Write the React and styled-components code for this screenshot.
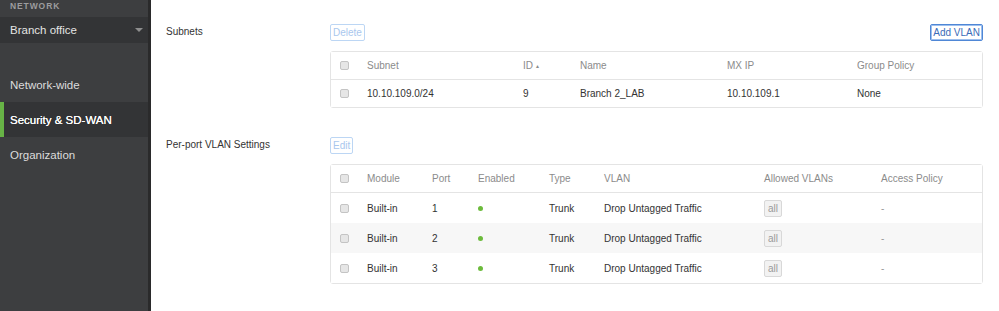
import React from 'react';
import styled, { createGlobalStyle } from 'styled-components';

const GlobalStyle = createGlobalStyle`
    html, body {
        margin: 0;
        padding: 0;
        background: #ffffff;
        font-family: "Liberation Sans", Arial, sans-serif;
    }
`;

const Page = styled.div`
    display: grid;
    grid-template-columns: 151px 1fr;
    width: 999px;
    height: 311px;
    overflow: hidden;
`;

const Sidebar = styled.aside`
    background: #3d3e40;
    border-right: 3px solid #2a2a2b;
    display: flex;
    flex-direction: column;
`;

const SideLabel = styled.div`
    height: 17px;
    padding: 0 10px;
    font-size: 8.5px;
    font-weight: bold;
    letter-spacing: 0.9px;
    line-height: 13px;
    color: #9c9c9e;
`;

const Dropdown = styled.div`
    height: 26px;
    padding: 0 5px 0 10px;
    background: #333436;
    display: flex;
    align-items: center;
    justify-content: space-between;
    font-size: 11.5px;
    color: #e4e4e4;
`;

const Caret = styled.span`
    width: 0;
    height: 0;
    border-left: 4px solid transparent;
    border-right: 4px solid transparent;
    border-top: 4px solid #8e8e8e;
`;

const Nav = styled.nav`
    margin-top: 24px;
    display: flex;
    flex-direction: column;
`;

const NavItem = styled.div`
    height: 35px;
    display: flex;
    align-items: center;
    font-size: 11.5px;
    color: ${p => (p.$active ? '#ffffff' : '#dcdcdc')};
    text-shadow: ${p => (p.$active ? '0 0 0.4px #ffffff' : 'none')};
    background: ${p => (p.$active ? '#333436' : 'transparent')};
    border-left: ${p => (p.$active ? '4px solid #67b346' : '0')};
    padding-left: ${p => (p.$active ? '6px' : '10px')};
`;

const Main = styled.main`
    padding: 24px 16px 0 15px;
`;

const Section = styled.section`
    display: grid;
    grid-template-columns: 164px 1fr;
    margin-bottom: 29px;
`;

const Label = styled.div`
    font-size: 10px;
    color: #333;
    line-height: 16px;
`;

const Toolbar = styled.div`
    display: flex;
    justify-content: space-between;
    margin-bottom: 10px;
`;

const Button = styled.button`
    height: 17px;
    padding: 0 2px;
    font-family: inherit;
    font-size: 10px;
    background: #fff;
    border-radius: 2px;
    border: 1px solid ${p => (p.$primary ? '#4f87d6' : '#bcd6f4')};
    color: ${p => (p.$primary ? '#3b6cb8' : '#a9c7ee')};
    box-shadow: ${p => (p.$primary ? 'inset 0 0 0 1px #9dbfee' : 'none')};
    cursor: pointer;
`;

const Table = styled.div`
    border: 1px solid #e4e4e4;
    border-radius: 3px;
    font-size: 10px;
`;

const Row = styled.div`
    display: grid;
    grid-template-columns: ${p => p.$cols};
    align-items: center;
    height: ${p => p.$h}px;
    background: ${p => (p.$striped ? '#f7f7f7' : '#fff')};
    border-bottom: ${p => (p.$head ? '1px solid #e4e4e4' : '0')};
    color: ${p => (p.$head ? '#8b8b8b' : '#333')};
`;

const Check = styled.span`
    display: block;
    width: 7px;
    height: 7px;
    margin-left: 9px;
    border: 1px solid #c4c4c4;
    border-radius: 2px;
    background: #e6e6e6;
`;

const Sort = styled.span`
    font-size: 5px;
    margin-left: 2px;
    vertical-align: 1px;
`;

const Dot = styled.span`
    display: block;
    width: 5px;
    height: 5px;
    border-radius: 50%;
    background: #6cbb3c;
`;

const Tag = styled.span`
    display: inline-block;
    padding: 2px 3px;
    border: 1px solid #d8d8d8;
    border-radius: 2px;
    background: #f2f2f2;
    color: #9a9a9a;
    font-size: 10px;
`;

const Muted = styled.span`
    color: #999;
`;

const subnetCols = '36px 156px 57px 147px 130px 1fr';
const portCols = '36px 65px 46px 71px 55px 160px 117px 1fr';

const ports = [1, 2, 3];

export default function App() {
    return (
        <Page>
            <GlobalStyle />
            <Sidebar>
                <SideLabel>NETWORK</SideLabel>
                <Dropdown>
                    Branch office
                    <Caret />
                </Dropdown>
                <Nav>
                    <NavItem>Network-wide</NavItem>
                    <NavItem $active>Security &amp; SD-WAN</NavItem>
                    <NavItem>Organization</NavItem>
                </Nav>
            </Sidebar>
            <Main>
                <Section>
                    <Label>Subnets</Label>
                    <div>
                        <Toolbar>
                            <Button>Delete</Button>
                            <Button $primary>Add VLAN</Button>
                        </Toolbar>
                        <Table>
                            <Row $cols={subnetCols} $h={27} $head>
                                <Check />
                                <span>Subnet</span>
                                <span>ID<Sort>▲</Sort></span>
                                <span>Name</span>
                                <span>MX IP</span>
                                <span>Group Policy</span>
                            </Row>
                            <Row $cols={subnetCols} $h={27}>
                                <Check />
                                <span>10.10.109.0/24</span>
                                <span>9</span>
                                <span>Branch 2_LAB</span>
                                <span>10.10.109.1</span>
                                <span>None</span>
                            </Row>
                        </Table>
                    </div>
                </Section>
                <Section>
                    <Label>Per-port VLAN Settings</Label>
                    <div>
                        <Toolbar>
                            <Button>Edit</Button>
                        </Toolbar>
                        <Table>
                            <Row $cols={portCols} $h={27} $head>
                                <Check />
                                <span>Module</span>
                                <span>Port</span>
                                <span>Enabled</span>
                                <span>Type</span>
                                <span>VLAN</span>
                                <span>Allowed VLANs</span>
                                <span>Access Policy</span>
                            </Row>
                            {ports.map((port, i) => (
                                <Row key={port} $cols={portCols} $h={30} $striped={i === 1}>
                                    <Check />
                                    <span>Built-in</span>
                                    <span>{port}</span>
                                    <Dot />
                                    <span>Trunk</span>
                                    <span>Drop Untagged Traffic</span>
                                    <span><Tag>all</Tag></span>
                                    <Muted>-</Muted>
                                </Row>
                            ))}
                        </Table>
                    </div>
                </Section>
            </Main>
        </Page>
    );
}
